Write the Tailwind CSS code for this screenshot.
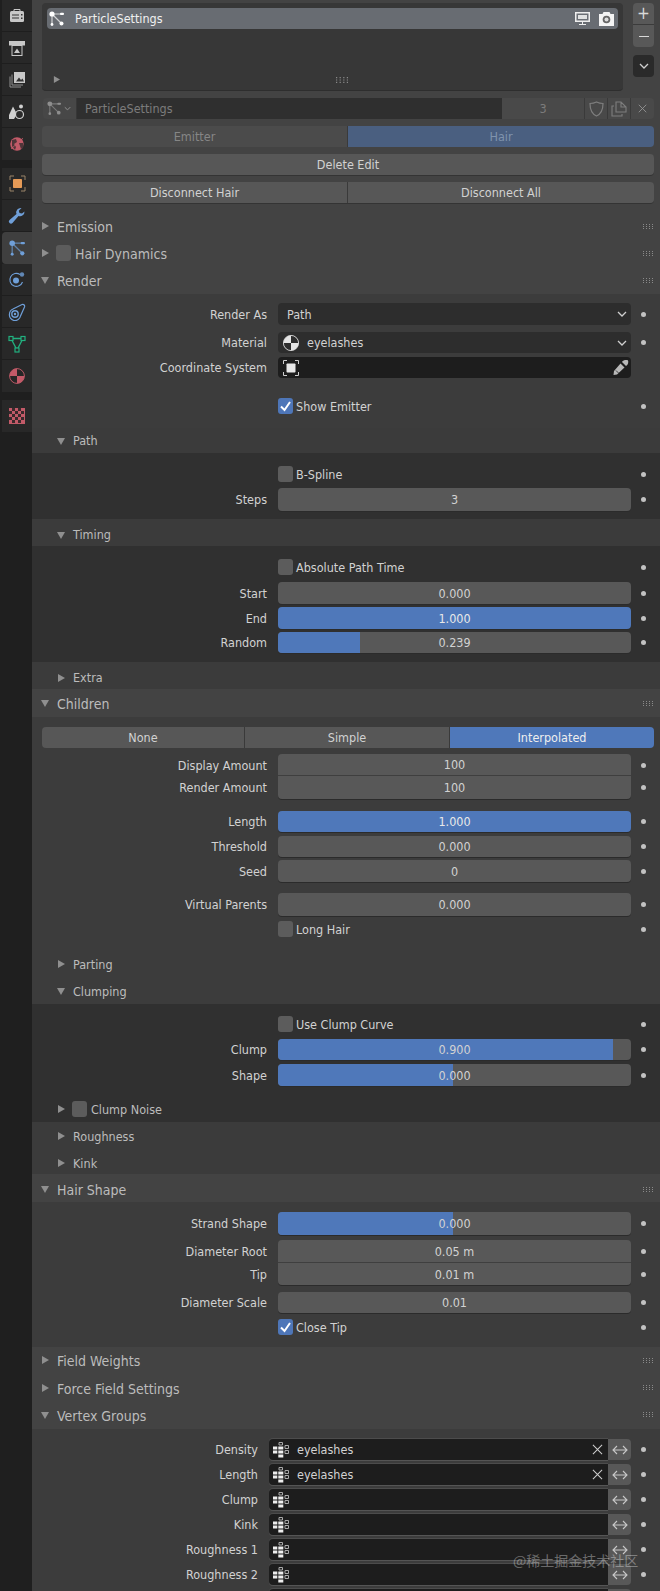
<!DOCTYPE html>
<html lang="en">
<head>
<meta charset="UTF-8">
<title>Particle properties</title>
<script src="https://cdn.jsdelivr.net/npm/@tailwindcss/browser@4"></script>
</head>
<body class="bg-[#434343] text-[#d2d2d2] font-['DejaVu_Sans',sans-serif] font-stretch-condensed text-[12.5px] leading-none">
<svg class="hidden">
  <symbol id="particle" viewBox="0 0 16 16">
    <path d="M3 3 3 13M3 3 13 13M3 3H14" fill="none" stroke="currentColor" stroke-width="1.2" opacity=".7"/>
    <circle cx="3" cy="3" r="2.6" fill="currentColor"/>
    <circle cx="12.5" cy="12.5" r="2" fill="currentColor"/>
    <circle cx="3" cy="13.5" r="1.4" fill="currentColor"/>
    <rect x="11" y="1.8" width="4" height="2.2" rx="1" fill="currentColor"/>
  </symbol>
  <symbol id="grip" viewBox="0 0 10 5">
    <path d="M0 0h1v1H0zM3 0h1v1H3zM6 0h1v1H6zM9 0h1v1H9zM0 2h1v1H0zM3 2h1v1H3zM6 2h1v1H6zM9 2h1v1H9zM0 4h1v1H0zM3 4h1v1H3zM6 4h1v1H6zM9 4h1v1H9z" fill="#8a8a8a"/>
  </symbol>
  <symbol id="right" viewBox="0 0 8 8"><path d="M1 0 8 4 1 8z" fill="#8f8f8f"/></symbol>
  <symbol id="down" viewBox="0 0 8 8"><path d="M0 1H8L4 8z" fill="#8f8f8f"/></symbol>
  <symbol id="chev" viewBox="0 0 10 6"><path d="M1 1 5 5 9 1" fill="none" stroke="#d0d0d0" stroke-width="1.3"/></symbol>
  <symbol id="check" viewBox="0 0 15 16"><path d="M3 8.5 6.5 12 12 4" fill="none" stroke="#fff" stroke-width="2"/></symbol>
  <symbol id="vg" viewBox="0 0 16 16">
    <path d="M0 4.500h4.300v3H0zM0 8.500h4.300v3H0zM5.300 4.500h5v3h-5zM5.300 8.500h5v3h-5zM5.300 12.500h5v3h-5z" fill="#eee"/>
    <path d="M6 .5h3.500v2.500H6zM12 3.500h3.500v3H12zM12 8.500h3.500v3H12z" fill="none" stroke="#aaa"/>
  </symbol>
  <symbol id="swap" viewBox="0 0 16 10">
    <path d="M1 5H15M5 1 1 5 5 9M11 1 15 5 11 9" fill="none" stroke="#c8c8c8" stroke-width="1.1"/>
  </symbol>
  <symbol id="x" viewBox="0 0 12 12"><path d="M1 1 11 11M11 1 1 11" fill="none" stroke="#cfcfcf" stroke-width="1.1"/></symbol>
</svg>

<div class="flex w-[660px] h-[1591px] overflow-hidden">
  <!-- tabs -->
  <aside class="w-[32px] shrink-0 bg-[#1f1f1f] flex flex-col">
    <div class="h-[32px] ml-[2px] flex items-center justify-center bg-[#282828] border-b border-[#1e1e1e] text-[#c8c8c8]">
      <svg width="16" height="16" viewBox="0 0 16 16"><path d="M5 3V1.500h6V3" fill="none" stroke="currentColor"/><rect x="1" y="3" width="14" height="11" rx="1.500" fill="currentColor"/><path d="M3 6.500h7v1H3zM3 9.500h7v1H3z" fill="#333"/><rect x="12" y="6" width="1.500" height="1.500" fill="#333"/><rect x="12" y="9.500" width="1.500" height="1.500" fill="#333"/></svg>
    </div>
    <div class="h-[32px] ml-[2px] flex items-center justify-center bg-[#282828] border-b border-[#1e1e1e] text-[#c8c8c8]">
      <svg width="18" height="18" viewBox="0 0 18 18"><rect x="1" y="2" width="16" height="4.500" fill="currentColor"/><rect x="4" y="6.500" width="10" height="10" fill="#2a2a2a" stroke="currentColor"/><path d="M6 14 9 9.500 12 14z" fill="currentColor"/></svg>
    </div>
    <div class="h-[32px] ml-[2px] flex items-center justify-center bg-[#282828] border-b border-[#1e1e1e] text-[#c8c8c8]">
      <svg width="17" height="17" viewBox="0 0 17 17"><path d="M1 5.500v10.500h11M3 3.500v10.500h11" fill="none" stroke="#8f8f8f"/><rect x="5" y="1" width="11" height="11" fill="currentColor"/><path d="M7 10.500 10 6.500 12 9 13.500 7.500 15 10.500z" fill="#333"/></svg>
    </div>
    <div class="h-[32px] ml-[2px] flex items-center justify-center bg-[#282828] border-b border-[#1e1e1e] text-[#d0d0d0]">
      <svg width="18" height="18" viewBox="0 0 18 18"><path d="M5 3.500 9 11 6 16H1V12z" fill="currentColor"/><circle cx="13" cy="3.500" r="2" fill="currentColor"/><circle cx="11.500" cy="11.500" r="4" fill="#2a2a2a" stroke="currentColor" stroke-width="1.200"/></svg>
    </div>
    <div class="h-[32px] ml-[2px] flex items-center justify-center bg-[#282828]">
      <svg width="18" height="18" viewBox="0 0 18 18"><circle cx="9" cy="9" r="6.800" fill="#c25a68"/><path d="M4 5 8 4 9 7 6 9 8 12 7 15 4 11zM11 8l4 0 1 4-3 2z" fill="#2a2a2a" opacity=".75"/><path d="M3 14 15 3" stroke="#c25a68" stroke-width=".8"/></svg>
    </div>
    <div class="h-[8px]"></div>
    <div class="h-[32px] ml-[2px] flex items-center justify-center bg-[#282828] border-b border-[#1e1e1e]">
      <svg width="17" height="17" viewBox="0 0 17 17"><path d="M1 5V1H5M12 1h4V5M16 12v4H12M5 16H1V12" fill="none" stroke="#9a8468" stroke-width="1"/><rect x="4" y="4" width="9" height="9" rx=".8" fill="#e59a57"/></svg>
    </div>
    <div class="h-[32px] ml-[2px] flex items-center justify-center bg-[#282828] border-b border-[#1e1e1e]">
      <svg width="18" height="18" viewBox="0 0 18 18"><path d="M16.500 4.500A4.500 4.500 0 0 1 10.500 9L4.500 16A2.100 2.100 0 0 1 1.500 13L8.500 7A4.500 4.500 0 0 1 13.500 1L10.800 3.800 11.500 6 14 6.500z" fill="#6f9fd8"/></svg>
    </div>
    <div class="h-[32px] ml-[2px] flex items-center justify-center bg-[#3f3f3f] rounded-l-[4px] text-[#6f9fd8]">
      <svg width="17" height="17"><use href="#particle"/></svg>
    </div>
    <div class="h-[32px] ml-[2px] flex items-center justify-center bg-[#282828] border-b border-[#1e1e1e]">
      <svg width="18" height="18" viewBox="0 0 18 18"><path d="M12 3.500A6.500 6.500 0 1 0 14.500 11" fill="none" stroke="#6f9fd8" stroke-width="1.100"/><circle cx="8" cy="9.500" r="3" fill="#6f9fd8"/><circle cx="14" cy="3.500" r="2.200" fill="#6f9fd8" opacity=".8"/></svg>
    </div>
    <div class="h-[32px] ml-[2px] flex items-center justify-center bg-[#282828] border-b border-[#1e1e1e]">
      <svg width="18" height="18" viewBox="0 0 18 18"><path d="M1.500 11A5.500 5.500 0 0 1 5 6L14 1.500C16 1 17 2.500 16.500 4L12.500 13A5.500 5.500 0 0 1 1.500 11Z" fill="none" stroke="#6f9fd8" stroke-width="1.200"/><circle cx="7" cy="11" r="3.200" fill="none" stroke="#6f9fd8" stroke-width="1.400"/><circle cx="7" cy="11" r="1.200" fill="#6f9fd8"/></svg>
    </div>
    <div class="h-[32px] ml-[2px] flex items-center justify-center bg-[#282828] border-b border-[#1e1e1e]">
      <svg width="18" height="18" viewBox="0 0 18 18"><path d="M3 3.500H15L9 15z" fill="none" stroke="#22b07f" stroke-width="1.300"/><rect x="1" y="1.500" width="4" height="4" fill="#282828" stroke="#22b07f" stroke-width="1.200"/><rect x="13" y="1.500" width="4" height="4" fill="#282828" stroke="#22b07f" stroke-width="1.200"/><rect x="7" y="13" width="4" height="4" fill="#282828" stroke="#22b07f" stroke-width="1.200"/></svg>
    </div>
    <div class="h-[32px] ml-[2px] flex items-center justify-center bg-[#282828]">
      <svg width="18" height="18" viewBox="0 0 18 18"><circle cx="9" cy="9" r="7.400" fill="#c25a68"/><path d="M9 1.600A7.400 7.400 0 0 1 16.400 9H9zM9 9H1.600A7.400 7.400 0 0 0 9 16.400z" fill="#262626"/><circle cx="9" cy="9" r="7.400" fill="none" stroke="#c25a68" stroke-width=".9"/></svg>
    </div>
    <div class="h-[8px]"></div>
    <div class="h-[32px] ml-[2px] flex items-center justify-center bg-[#282828]">
      <svg width="16" height="16" viewBox="0 0 16 16"><rect width="16" height="16" fill="#c25a68"/><path d="M3 0h3v3H3zM9 0h3v3H9zM0 3h3v3H0zM6 3h3v3H6zM12 3h3v3h-3zM3 6h3v3H3zM9 6h3v3H9zM0 9h3v3H0zM6 9h3v3H6zM12 9h3v3h-3zM3 12h3v3H3zM9 12h3v3H9z" fill="#3a2a2c"/></svg>
    </div>
  </aside>

  <!-- properties -->
  <main class="relative flex-1 min-w-0 pt-[3px] [&_span]:relative [&_span]:top-px">
    <div class="flex">
      <div class="ml-[10px] w-[581px] h-[88px] bg-[#373737] rounded-[4px] border-b border-[#2e2e2e] px-[5px] pt-[5px] flex flex-col">
        <div class="h-[21px] bg-[#686c72] rounded-[4px] flex items-center pl-[2px] pr-[4px] text-[#f0f0f0]">
          <svg width="16" height="16" class="text-white"><use href="#particle"/></svg>
          <span class="ml-[10px]">ParticleSettings</span>
          <svg class="ml-auto" width="15" height="14" viewBox="0 0 15 14"><path d="M0 0h15v10H0z" fill="#eee"/><path d="M1.500 1.500h12v7h-12z" fill="#6b6f75"/><path d="M3 3h9v4H3z" fill="#eee" opacity=".9"/><path d="M7 10h1v2h3v1H4v-1h3z" fill="#eee"/></svg>
          <svg class="ml-[9px]" width="15" height="14" viewBox="0 0 15 14"><path d="M0 2h3.500L4.500 0h6L11.500 2H15v12H0z" fill="#f4f4f4"/><circle cx="7.500" cy="7.500" r="3.800" fill="#666"/><circle cx="7.500" cy="7.500" r="2" fill="#ddd"/></svg>
        </div>
        <div class="mt-auto mb-[7px] flex items-center">
          <svg class="ml-[6px]" width="7" height="7"><use href="#right"/></svg>
          <svg class="ml-[276px]" width="12" height="6" viewBox="0 0 10 5"><use href="#grip"/></svg>
        </div>
      </div>
      <div class="ml-[10px] w-[21px]">
        <div class="h-[22px] bg-[#585858] rounded-t-[4px] flex items-center justify-center border-b border-[#3b3b3b] text-[#d8d8d8] text-[17px]">+</div>
        <div class="h-[22px] bg-[#585858] rounded-b-[4px] flex items-center justify-center"><div class="w-[10px] h-px bg-[#d8d8d8]"></div></div>
        <div class="mt-[8px] h-[22px] bg-[#2a2a2a] rounded-[4px] flex items-center justify-center"><svg width="10" height="6"><use href="#chev"/></svg></div>
      </div>
    </div>

    <div class="flex h-[21px] mt-[7px] ml-[11px] mr-[6px] text-[#7c7c7c]">
      <div class="w-[34px] bg-[#474747] rounded-l-[4px] border-r border-[#373737] flex items-center pl-[4px] text-[#8e8e8e]">
        <svg width="15" height="15"><use href="#particle"/></svg>
        <svg class="ml-[2px] opacity-60" width="7" height="5" viewBox="0 0 10 6"><use href="#chev"/></svg>
      </div>
      <div class="w-[425px] bg-[#2f2f2f] flex items-center pl-[8px]"><span>ParticleSettings</span></div>
      <div class="w-[83px] bg-[#494949] border-r border-[#3a3a3a] flex items-center justify-center"><span>3</span></div>
      <div class="w-[23px] bg-[#494949] border-r border-[#3a3a3a] flex items-center justify-center">
        <svg width="15" height="16" viewBox="0 0 15 16"><path d="M7.500 1C10 2.200 12 2.500 14 2.500 14 9 12 13 7.500 15 3 13 1 9 1 2.500 3 2.500 5 2.200 7.500 1Z" fill="none" stroke="#7e7e7e" stroke-width="1.200"/></svg>
      </div>
      <div class="w-[23px] bg-[#494949] border-r border-[#3a3a3a] flex items-center justify-center">
        <svg width="16" height="16" viewBox="0 0 16 16"><path d="M5 1H10L15 6V11H5zM10 1V6H15M3 5H1V15H11V13" fill="none" stroke="#7e7e7e" stroke-width="1.100"/></svg>
      </div>
      <div class="w-[23px] bg-[#494949] rounded-r-[4px] flex items-center justify-center">
        <svg width="9" height="9" viewBox="0 0 12 12" class="opacity-60"><use href="#x"/></svg>
      </div>
    </div>

    <div class="flex h-[21px] mt-[7px] ml-[10px] mr-[6px] rounded-[4px] overflow-hidden">
      <div class="flex-1 bg-[#4b4b4b] text-[#868686] flex items-center justify-center border-r border-[#3a3a3a]"><span>Emitter</span></div>
      <div class="w-[306px] bg-[#4a5f80] text-[#7f93ad] flex items-center justify-center"><span>Hair</span></div>
    </div>
    <div class="h-[21px] mt-[7px] ml-[10px] mr-[6px] rounded-[4px] bg-[#575757] flex items-center justify-center shadow-[0_1px_0_#343434]"><span>Delete Edit</span></div>
    <div class="flex h-[21px] mt-[7px] ml-[10px] mr-[6px] rounded-[4px] overflow-hidden shadow-[0_1px_0_#343434]">
      <div class="flex-1 bg-[#575757] flex items-center justify-center border-r border-[#3a3a3a]"><span>Disconnect Hair</span></div>
      <div class="w-[306px] bg-[#575757] flex items-center justify-center"><span>Disconnect All</span></div>
    </div>

    <!-- top level panels -->
    <div class="mt-[11px] h-[27px] flex items-center pl-[9px] pb-[3px] text-[14px] text-[#bcbcbc]">
      <svg width="8" height="8"><use href="#right"/></svg><span class="ml-[8px]">Emission</span>
      <svg class="ml-auto mr-[7px]" width="10" height="5"><use href="#grip"/></svg>
    </div>
    <div class="h-[27px] flex items-center pl-[9px] pb-[3px] text-[14px] text-[#bcbcbc]">
      <svg width="8" height="8"><use href="#right"/></svg>
      <div class="ml-[7px] w-[15px] h-[16px] rounded-[3px] bg-[#5c5c5c]"></div>
      <span class="ml-[4px]">Hair Dynamics</span>
      <svg class="ml-auto mr-[7px]" width="10" height="5"><use href="#grip"/></svg>
    </div>
    <div class="h-[26px] flex items-center pl-[9px] pb-[2px] text-[14px] text-[#bcbcbc]">
      <svg width="8" height="8"><use href="#down"/></svg><span class="ml-[8px]">Render</span>
      <svg class="ml-auto mr-[7px]" width="10" height="5"><use href="#grip"/></svg>
    </div>

    <section class="bg-[#3c3c3c] pt-[9px]">
      <div class="flex items-center h-[22px]">
        <span class="w-[235px] text-right shrink-0">Render As</span>
        <div class="ml-[11px] w-[353px] h-full rounded-[4px] bg-[#2d2d2d] flex items-center pl-[9px] pr-[4px]"><span>Path</span><svg class="ml-auto" width="10" height="6"><use href="#chev"/></svg></div>
        <div class="ml-[10px] w-[5px] h-[5px] rounded-full bg-[#c2c2c2]"></div>
      </div>
      <div class="flex items-center h-[21px] mt-[7px]">
        <span class="w-[235px] text-right shrink-0">Material</span>
        <div class="ml-[11px] w-[353px] h-full rounded-[4px] bg-[#2d2d2d] flex items-center pl-[5px] pr-[4px]">
          <svg width="16" height="16" viewBox="0 0 16 16"><circle cx="8" cy="8" r="7.600" fill="#e4e4e4"/><path d="M8 8V.4A7.600 7.600 0 0 1 15.600 8zM8 8H.4A7.600 7.600 0 0 0 8 15.600z" fill="#2d2d2d"/><circle cx="8" cy="8" r="7.600" fill="none" stroke="#e4e4e4" stroke-width=".8"/></svg>
          <span class="ml-[8px]">eyelashes</span><svg class="ml-auto" width="10" height="6"><use href="#chev"/></svg>
        </div>
        <div class="ml-[10px] w-[5px] h-[5px] rounded-full bg-[#c2c2c2]"></div>
      </div>
      <div class="flex items-center h-[21px] mt-[4px]">
        <span class="w-[235px] text-right shrink-0">Coordinate System</span>
        <div class="ml-[11px] w-[353px] h-full rounded-[4px] bg-[#1d1d1d] flex items-center pl-[5px] pr-[2px]">
          <svg width="16" height="16" viewBox="0 0 16 16"><path d="M.5 4V.5H4M12 .5h3.500V4M15.500 12v3.500H12M4 15.500H.5V12" fill="none" stroke="#cfcfcf"/><rect x="3.500" y="3.500" width="9" height="9" rx=".8" fill="#e8e8e8"/></svg>
          <svg class="ml-auto" width="17" height="17" viewBox="0 0 17 17"><path d="M10 3C11 1 15 .5 16 1.500 16.800 3 16 6 14 7zM8.500 4.500 12.500 8.500 5 15.500 1.500 16 2 12z" fill="#b8b8b8"/><path d="M4 11.500 6.500 14" stroke="#1d1d1d" stroke-width=".8"/></svg>
        </div>
      </div>
      <div class="flex items-center h-[22px] mt-[17px]">
        <div class="ml-[246px] w-[15px] h-[16px] rounded-[3px] bg-[#4e76b8]"><svg width="15" height="16"><use href="#check"/></svg></div>
        <span class="ml-[3px]">Show Emitter</span>
        <div class="ml-auto mr-[14px] w-[5px] h-[5px] rounded-full bg-[#c2c2c2]"></div>
      </div>

      <div class="mt-[11px] h-[25px] flex items-center pl-[25px] text-[#bcbcbc] bg-[#3b3b3b]"><svg width="8" height="8"><use href="#down"/></svg><span class="ml-[8px]">Path</span></div>
      <div class="bg-[#303030] pt-[10px] pb-[8px]">
        <div class="flex items-center h-[22px]">
          <div class="ml-[246px] w-[15px] h-[16px] rounded-[3px] bg-[#5c5c5c]"></div>
          <span class="ml-[3px]">B-Spline</span>
          <div class="ml-auto mr-[14px] w-[5px] h-[5px] rounded-full bg-[#c2c2c2]"></div>
        </div>
        <div class="flex items-center h-[23px] mt-[3px]">
          <span class="w-[235px] text-right shrink-0">Steps</span>
          <div class="ml-[11px] w-[353px] h-full rounded-[4px] bg-[#585858] flex items-center justify-center shadow-[0_1px_0_#2b2b2b]"><span>3</span></div>
          <div class="ml-[10px] w-[5px] h-[5px] rounded-full bg-[#c2c2c2]"></div>
        </div>
      </div>

      <div class="h-[27px] flex items-center pl-[25px] pt-[4px] text-[#bcbcbc] bg-[#3b3b3b]"><svg width="8" height="8"><use href="#down"/></svg><span class="ml-[8px]">Timing</span></div>
      <div class="bg-[#303030] pt-[10px] pb-[9px]">
        <div class="flex items-center h-[22px]">
          <div class="ml-[246px] w-[15px] h-[16px] rounded-[3px] bg-[#5c5c5c]"></div>
          <span class="ml-[3px]">Absolute Path Time</span>
          <div class="ml-auto mr-[14px] w-[5px] h-[5px] rounded-full bg-[#c2c2c2]"></div>
        </div>
        <div class="flex items-center h-[22px] mt-[4px]">
          <span class="w-[235px] text-right shrink-0">Start</span>
          <div class="ml-[11px] w-[353px] h-full rounded-[4px] bg-[#585858] flex items-center justify-center shadow-[0_1px_0_#2b2b2b]"><span>0.000</span></div>
          <div class="ml-[10px] w-[5px] h-[5px] rounded-full bg-[#c2c2c2]"></div>
        </div>
        <div class="flex items-center h-[22px] mt-[3px]">
          <span class="w-[235px] text-right shrink-0">End</span>
          <div class="ml-[11px] w-[353px] h-full rounded-[4px] bg-[#4f78ba] text-[#e8e8e8] flex items-center justify-center shadow-[0_1px_0_#2b2b2b]"><span>1.000</span></div>
          <div class="ml-[10px] w-[5px] h-[5px] rounded-full bg-[#c2c2c2]"></div>
        </div>
        <div class="flex items-center h-[21px] mt-[3px]">
          <span class="w-[235px] text-right shrink-0">Random</span>
          <div class="relative ml-[11px] w-[353px] h-full rounded-[4px] overflow-hidden bg-[#585858] flex items-center justify-center shadow-[0_1px_0_#2b2b2b]">
            <div class="absolute inset-y-0 left-0 w-[82px] bg-[#4f78ba]"></div><span>0.239</span>
          </div>
          <div class="ml-[10px] w-[5px] h-[5px] rounded-full bg-[#c2c2c2]"></div>
        </div>
      </div>
      <div class="h-[27px] flex items-center pl-[25px] pt-[4px] text-[#bcbcbc] bg-[#3b3b3b]"><svg width="8" height="8"><use href="#right"/></svg><span class="ml-[8px]">Extra</span></div>
    </section>

    <div class="h-[28px] flex items-center pl-[9px] text-[14px] text-[#bcbcbc] bg-[#434343]">
      <svg width="8" height="8"><use href="#down"/></svg><span class="ml-[8px]">Children</span>
      <svg class="ml-auto mr-[7px]" width="10" height="5"><use href="#grip"/></svg>
    </div>

    <section class="bg-[#3c3c3c] pt-[10px]">
      <div class="flex h-[21px] ml-[10px] mr-[6px] rounded-[4px] overflow-hidden">
        <div class="w-[203px] bg-[#575757] flex items-center justify-center border-r border-[#3a3a3a]"><span>None</span></div>
        <div class="w-[205px] bg-[#575757] flex items-center justify-center border-r border-[#3a3a3a]"><span>Simple</span></div>
        <div class="flex-1 bg-[#4f78ba] text-[#eee] flex items-center justify-center"><span>Interpolated</span></div>
      </div>
      <div class="flex items-center h-[22px] mt-[6px]">
        <span class="w-[235px] text-right shrink-0">Display Amount</span>
        <div class="ml-[11px] w-[353px] h-full rounded-t-[4px] bg-[#585858] flex items-center justify-center border-b border-[#3f3f3f]"><span>100</span></div>
        <div class="ml-[10px] w-[5px] h-[5px] rounded-full bg-[#c2c2c2]"></div>
      </div>
      <div class="flex items-center h-[23px]">
        <span class="w-[235px] text-right shrink-0">Render Amount</span>
        <div class="ml-[11px] w-[353px] h-full rounded-b-[4px] bg-[#585858] flex items-center justify-center shadow-[0_1px_0_#2b2b2b]"><span>100</span></div>
        <div class="ml-[10px] w-[5px] h-[5px] rounded-full bg-[#c2c2c2]"></div>
      </div>
      <div class="flex items-center h-[21px] mt-[12px]">
        <span class="w-[235px] text-right shrink-0">Length</span>
        <div class="ml-[11px] w-[353px] h-full rounded-[4px] bg-[#4f78ba] text-[#e8e8e8] flex items-center justify-center shadow-[0_1px_0_#2b2b2b]"><span>1.000</span></div>
        <div class="ml-[10px] w-[5px] h-[5px] rounded-full bg-[#c2c2c2]"></div>
      </div>
      <div class="flex items-center h-[21px] mt-[4px]">
        <span class="w-[235px] text-right shrink-0">Threshold</span>
        <div class="ml-[11px] w-[353px] h-full rounded-[4px] bg-[#585858] flex items-center justify-center shadow-[0_1px_0_#2b2b2b]"><span>0.000</span></div>
        <div class="ml-[10px] w-[5px] h-[5px] rounded-full bg-[#c2c2c2]"></div>
      </div>
      <div class="flex items-center h-[22px] mt-[3px]">
        <span class="w-[235px] text-right shrink-0">Seed</span>
        <div class="ml-[11px] w-[353px] h-full rounded-[4px] bg-[#585858] flex items-center justify-center shadow-[0_1px_0_#2b2b2b]"><span>0</span></div>
        <div class="ml-[10px] w-[5px] h-[5px] rounded-full bg-[#c2c2c2]"></div>
      </div>
      <div class="flex items-center h-[23px] mt-[11px]">
        <span class="w-[235px] text-right shrink-0">Virtual Parents</span>
        <div class="ml-[11px] w-[353px] h-full rounded-[4px] bg-[#585858] flex items-center justify-center shadow-[0_1px_0_#2b2b2b]"><span>0.000</span></div>
        <div class="ml-[10px] w-[5px] h-[5px] rounded-full bg-[#c2c2c2]"></div>
      </div>
      <div class="flex items-center h-[22px] mt-[2px]">
        <div class="ml-[246px] w-[15px] h-[16px] rounded-[3px] bg-[#5c5c5c]"></div>
        <span class="ml-[3px]">Long Hair</span>
        <div class="ml-auto mr-[14px] w-[5px] h-[5px] rounded-full bg-[#c2c2c2]"></div>
      </div>

      <div class="mt-[12px] h-[26px] flex items-center pl-[25px] pb-[2px] text-[#bcbcbc]"><svg width="8" height="8"><use href="#right"/></svg><span class="ml-[8px]">Parting</span></div>
      <div class="h-[26px] flex items-center pl-[25px] text-[#bcbcbc]"><svg width="8" height="8"><use href="#down"/></svg><span class="ml-[8px]">Clumping</span></div>
      <div class="bg-[#303030] pt-[9px]">
        <div class="flex items-center h-[22px]">
          <div class="ml-[246px] w-[15px] h-[16px] rounded-[3px] bg-[#5c5c5c]"></div>
          <span class="ml-[3px]">Use Clump Curve</span>
          <div class="ml-auto mr-[14px] w-[5px] h-[5px] rounded-full bg-[#c2c2c2]"></div>
        </div>
        <div class="flex items-center h-[21px] mt-[4px]">
          <span class="w-[235px] text-right shrink-0">Clump</span>
          <div class="relative ml-[11px] w-[353px] h-full rounded-[4px] overflow-hidden bg-[#585858] flex items-center justify-center shadow-[0_1px_0_#2b2b2b]">
            <div class="absolute inset-y-0 left-0 w-[335px] bg-[#4f78ba]"></div><span>0.900</span>
          </div>
          <div class="ml-[10px] w-[5px] h-[5px] rounded-full bg-[#c2c2c2]"></div>
        </div>
        <div class="flex items-center h-[22px] mt-[4px]">
          <span class="w-[235px] text-right shrink-0">Shape</span>
          <div class="relative ml-[11px] w-[353px] h-full rounded-[4px] overflow-hidden bg-[#585858] flex items-center justify-center shadow-[0_1px_0_#2b2b2b]">
            <div class="absolute inset-y-0 left-0 w-[175px] bg-[#4f78ba]"></div><span>0.000</span>
          </div>
          <div class="ml-[10px] w-[5px] h-[5px] rounded-full bg-[#c2c2c2]"></div>
        </div>
        <div class="mt-[10px] h-[26px] flex items-center pl-[25px] text-[#bcbcbc]">
          <svg width="8" height="8"><use href="#right"/></svg>
          <div class="ml-[7px] w-[15px] h-[16px] rounded-[3px] bg-[#5c5c5c]"></div>
          <span class="ml-[4px]">Clump Noise</span>
        </div>
      </div>
      <div class="h-[28px] flex items-center pl-[25px] text-[#bcbcbc] bg-[#3b3b3b]"><svg width="8" height="8"><use href="#right"/></svg><span class="ml-[8px]">Roughness</span></div>
      <div class="h-[24px] flex items-center pl-[25px] pt-[2px] text-[#bcbcbc] bg-[#3b3b3b]"><svg width="8" height="8"><use href="#right"/></svg><span class="ml-[8px]">Kink</span></div>
    </section>

    <div class="h-[28px] flex items-center pl-[9px] pt-[2px] text-[14px] text-[#bcbcbc] bg-[#434343]">
      <svg width="8" height="8"><use href="#down"/></svg><span class="ml-[8px]">Hair Shape</span>
      <svg class="ml-auto mr-[7px]" width="10" height="5"><use href="#grip"/></svg>
    </div>
    <section class="bg-[#3c3c3c] pt-[10px] pb-[9px]">
      <div class="flex items-center h-[23px]">
        <span class="w-[235px] text-right shrink-0">Strand Shape</span>
        <div class="relative ml-[11px] w-[353px] h-full rounded-[4px] overflow-hidden bg-[#585858] flex items-center justify-center shadow-[0_1px_0_#2b2b2b]">
          <div class="absolute inset-y-0 left-0 w-[175px] bg-[#4f78ba]"></div><span>0.000</span>
        </div>
        <div class="ml-[10px] w-[5px] h-[5px] rounded-full bg-[#c2c2c2]"></div>
      </div>
      <div class="flex items-center h-[23px] mt-[5px]">
        <span class="w-[235px] text-right shrink-0">Diameter Root</span>
        <div class="ml-[11px] w-[353px] h-full rounded-t-[4px] bg-[#585858] flex items-center justify-center border-b border-[#3f3f3f]"><span>0.05 m</span></div>
        <div class="ml-[10px] w-[5px] h-[5px] rounded-full bg-[#c2c2c2]"></div>
      </div>
      <div class="flex items-center h-[22px]">
        <span class="w-[235px] text-right shrink-0">Tip</span>
        <div class="ml-[11px] w-[353px] h-full rounded-b-[4px] bg-[#585858] flex items-center justify-center shadow-[0_1px_0_#2b2b2b]"><span>0.01 m</span></div>
        <div class="ml-[10px] w-[5px] h-[5px] rounded-full bg-[#c2c2c2]"></div>
      </div>
      <div class="flex items-center h-[21px] mt-[7px]">
        <span class="w-[235px] text-right shrink-0">Diameter Scale</span>
        <div class="ml-[11px] w-[353px] h-full rounded-[4px] bg-[#585858] flex items-center justify-center shadow-[0_1px_0_#2b2b2b]"><span>0.01</span></div>
        <div class="ml-[10px] w-[5px] h-[5px] rounded-full bg-[#c2c2c2]"></div>
      </div>
      <div class="flex items-center h-[22px] mt-[3px]">
        <div class="ml-[246px] w-[15px] h-[16px] rounded-[3px] bg-[#4e76b8]"><svg width="15" height="16"><use href="#check"/></svg></div>
        <span class="ml-[3px]">Close Tip</span>
        <div class="ml-auto mr-[14px] w-[5px] h-[5px] rounded-full bg-[#c2c2c2]"></div>
      </div>
    </section>

    <div class="h-[28px] flex items-center pl-[9px] pb-[2px] text-[14px] text-[#bcbcbc]">
      <svg width="8" height="8"><use href="#right"/></svg><span class="ml-[8px]">Field Weights</span>
      <svg class="ml-auto mr-[7px]" width="10" height="5"><use href="#grip"/></svg>
    </div>
    <div class="h-[27px] flex items-center pl-[9px] pb-[2px] text-[14px] text-[#bcbcbc]">
      <svg width="8" height="8"><use href="#right"/></svg><span class="ml-[8px]">Force Field Settings</span>
      <svg class="ml-auto mr-[7px]" width="10" height="5"><use href="#grip"/></svg>
    </div>
    <div class="h-[27px] flex items-center pl-[9px] pb-[2px] text-[14px] text-[#bcbcbc]">
      <svg width="8" height="8"><use href="#down"/></svg><span class="ml-[8px]">Vertex Groups</span>
      <svg class="ml-auto mr-[7px]" width="10" height="5"><use href="#grip"/></svg>
    </div>
    <section class="bg-[#3c3c3c] pt-[10px] pb-[10px]">
      <div class="flex items-center h-[21px]">
        <span class="w-[226px] text-right shrink-0">Density</span>
        <div class="ml-[11px] w-[339px] h-full rounded-l-[4px] bg-[#1d1d1d] flex items-center pl-[4px] pr-[5px] shadow-[0_-1px_0_#4c4c4c,0_1px_0_#555]">
          <svg width="16" height="16"><use href="#vg"/></svg><span class="ml-[8px]">eyelashes</span>
          <svg class="ml-auto" width="11" height="11"><use href="#x"/></svg>
        </div>
        <div class="w-[23px] h-full rounded-r-[4px] bg-[#585858] flex items-center justify-center"><svg width="16" height="10"><use href="#swap"/></svg></div>
        <div class="ml-[10px] w-[5px] h-[5px] rounded-full bg-[#c2c2c2]"></div>
      </div>
      <div class="flex items-center h-[21px] mt-[4px]">
        <span class="w-[226px] text-right shrink-0">Length</span>
        <div class="ml-[11px] w-[339px] h-full rounded-l-[4px] bg-[#1d1d1d] flex items-center pl-[4px] pr-[5px] shadow-[0_-1px_0_#4c4c4c,0_1px_0_#555]">
          <svg width="16" height="16"><use href="#vg"/></svg><span class="ml-[8px]">eyelashes</span>
          <svg class="ml-auto" width="11" height="11"><use href="#x"/></svg>
        </div>
        <div class="w-[23px] h-full rounded-r-[4px] bg-[#585858] flex items-center justify-center"><svg width="16" height="10"><use href="#swap"/></svg></div>
        <div class="ml-[10px] w-[5px] h-[5px] rounded-full bg-[#c2c2c2]"></div>
      </div>
      <div class="flex items-center h-[21px] mt-[4px]">
        <span class="w-[226px] text-right shrink-0">Clump</span>
        <div class="ml-[11px] w-[339px] h-full rounded-l-[4px] bg-[#1d1d1d] flex items-center pl-[4px] shadow-[0_-1px_0_#4c4c4c,0_1px_0_#555]"><svg width="16" height="16"><use href="#vg"/></svg></div>
        <div class="w-[23px] h-full rounded-r-[4px] bg-[#585858] flex items-center justify-center"><svg width="16" height="10"><use href="#swap"/></svg></div>
        <div class="ml-[10px] w-[5px] h-[5px] rounded-full bg-[#c2c2c2]"></div>
      </div>
      <div class="flex items-center h-[21px] mt-[4px]">
        <span class="w-[226px] text-right shrink-0">Kink</span>
        <div class="ml-[11px] w-[339px] h-full rounded-l-[4px] bg-[#1d1d1d] flex items-center pl-[4px] shadow-[0_-1px_0_#4c4c4c,0_1px_0_#555]"><svg width="16" height="16"><use href="#vg"/></svg></div>
        <div class="w-[23px] h-full rounded-r-[4px] bg-[#585858] flex items-center justify-center"><svg width="16" height="10"><use href="#swap"/></svg></div>
        <div class="ml-[10px] w-[5px] h-[5px] rounded-full bg-[#c2c2c2]"></div>
      </div>
      <div class="flex items-center h-[21px] mt-[4px]">
        <span class="w-[226px] text-right shrink-0">Roughness 1</span>
        <div class="ml-[11px] w-[339px] h-full rounded-l-[4px] bg-[#1d1d1d] flex items-center pl-[4px] shadow-[0_-1px_0_#4c4c4c,0_1px_0_#555]"><svg width="16" height="16"><use href="#vg"/></svg></div>
        <div class="w-[23px] h-full rounded-r-[4px] bg-[#585858] flex items-center justify-center"><svg width="16" height="10"><use href="#swap"/></svg></div>
        <div class="ml-[10px] w-[5px] h-[5px] rounded-full bg-[#c2c2c2]"></div>
      </div>
      <div class="flex items-center h-[21px] mt-[4px]">
        <span class="w-[226px] text-right shrink-0">Roughness 2</span>
        <div class="ml-[11px] w-[339px] h-full rounded-l-[4px] bg-[#1d1d1d] flex items-center pl-[4px] shadow-[0_-1px_0_#4c4c4c,0_1px_0_#555]"><svg width="16" height="16"><use href="#vg"/></svg></div>
        <div class="w-[23px] h-full rounded-r-[4px] bg-[#585858] flex items-center justify-center"><svg width="16" height="10"><use href="#swap"/></svg></div>
        <div class="ml-[10px] w-[5px] h-[5px] rounded-full bg-[#c2c2c2]"></div>
      </div>
      <div class="flex items-center h-[21px] mt-[4px]">
        <div class="ml-[237px] w-[339px] h-full rounded-l-[4px] bg-[#1d1d1d] shadow-[0_-1px_0_#4c4c4c]"></div>
        <div class="w-[23px] h-full rounded-r-[4px] bg-[#585858]"></div>
      </div>
    </section>

    <div class="absolute left-[481px] top-[1551px] text-[14px] leading-[18px] text-white/35 whitespace-nowrap font-['Noto_Sans_CJK_SC','DejaVu_Sans',sans-serif]">@稀土掘金技术社区</div>
  </main>
</div>
</body>
</html>
